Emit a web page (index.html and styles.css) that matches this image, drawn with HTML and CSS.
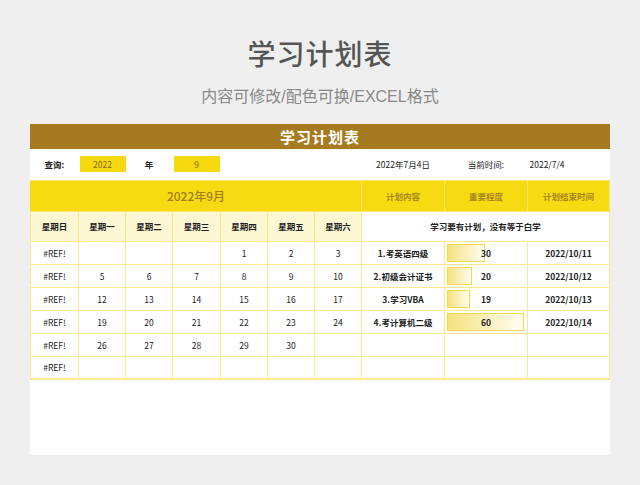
FILE: index.html
```html
<!DOCTYPE html>
<html lang="zh">
<head>
<meta charset="utf-8">
<title>学习计划表</title>
<link rel="stylesheet" href="styles.css">
</head>
<body>
<div class="page">
  <h1 class="title">学习计划表</h1>
  <p class="subtitle">内容可修改/配色可换/EXCEL格式</p>
  <div class="card">
    <div class="bar">学习计划表</div>
    <table class="grid">
      <colgroup>
        <col class="c48"><col class="c47"><col class="c47"><col class="c48"><col class="c47"><col class="c47"><col class="c47">
        <col class="c83"><col class="c83"><col class="c82">
      </colgroup>
      <tr class="query">
        <td class="bold">查询:</td>
        <td><div class="qbox">2022</div></td>
        <td class="bold">年</td>
        <td><div class="qbox">9</div></td>
        <td></td><td></td><td></td>
        <td>2022年7月4日</td>
        <td>当前时间:</td>
        <td class="left">2022/7/4</td>
      </tr>
      <tr class="head">
        <td colspan="7" class="month">2022年9月</td>
        <td class="hcell">计划内容</td>
        <td class="hcell">重要程度</td>
        <td class="hcell">计划结束时间</td>
      </tr>
      <tr class="week">
        <td>星期日</td><td>星期一</td><td>星期二</td><td>星期三</td><td>星期四</td><td>星期五</td><td>星期六</td>
        <td colspan="3" class="motto">学习要有计划，没有等于白学</td>
      </tr>
      <tr class="row">
        <td>#REF!</td><td></td><td></td><td></td><td>1</td><td>2</td><td>3</td>
        <td class="bold">1.考英语四级</td>
        <td class="lvl"><span class="lbar" style="width:38px"></span><span class="num">30</span></td>
        <td class="bold">2022/10/11</td>
      </tr>
      <tr class="row">
        <td>#REF!</td><td>5</td><td>6</td><td>7</td><td>8</td><td>9</td><td>10</td>
        <td class="bold">2.初级会计证书</td>
        <td class="lvl"><span class="lbar" style="width:25px"></span><span class="num">20</span></td>
        <td class="bold">2022/10/12</td>
      </tr>
      <tr class="row">
        <td>#REF!</td><td>12</td><td>13</td><td>14</td><td>15</td><td>16</td><td>17</td>
        <td class="bold">3.学习VBA</td>
        <td class="lvl"><span class="lbar" style="width:23px"></span><span class="num">19</span></td>
        <td class="bold">2022/10/13</td>
      </tr>
      <tr class="row">
        <td>#REF!</td><td>19</td><td>20</td><td>21</td><td>22</td><td>23</td><td>24</td>
        <td class="bold">4.考计算机二级</td>
        <td class="lvl"><span class="lbar" style="width:77px"></span><span class="num">60</span></td>
        <td class="bold">2022/10/14</td>
      </tr>
      <tr class="row">
        <td>#REF!</td><td>26</td><td>27</td><td>28</td><td>29</td><td>30</td><td></td>
        <td></td><td></td><td></td>
      </tr>
      <tr class="row last">
        <td>#REF!</td><td></td><td></td><td></td><td></td><td></td><td></td>
        <td></td><td></td><td></td>
      </tr>
    </table>
  </div>
</div>
</body>
</html>
```

FILE: styles.css
```css
* { box-sizing: border-box; }
html, body { margin: 0; padding: 0; }
body {
  background: #efefef;
  font-family: "Noto Sans CJK SC", "Noto Sans", sans-serif;
  color: #222;
}
.page { width: 640px; height: 485px; padding-top: 33px; }
.title {
  margin: 0;
  height: 40px;
  line-height: 40px;
  text-align: center;
  font-size: 28px;
  font-weight: 500;
  color: #555;
  letter-spacing: 1px;
}
.subtitle {
  margin: 14px 0 0;
  height: 20px;
  line-height: 20px;
  text-align: center;
  font-family: "Liberation Sans", "Noto Sans CJK SC", sans-serif;
  font-size: 16px;
  color: #888;
}
.card {
  margin: 17px 0 0 30px;
  width: 580px;
  height: 331px;
  background: #fff;
}
.bar {
  height: 25px;
  line-height: 25px;
  background: #a67a1e;
  color: #fff;
  text-align: center;
  font-size: 15px;
  font-weight: 700;
  letter-spacing: 1px;
}
.grid {
  width: 579px;
  border-collapse: collapse;
  table-layout: fixed;
  font-size: 8.5px;
}
.c48 { width: 48px; }
.c47 { width: 47px; }
.c83 { width: 83px; }
.c82 { width: 82px; }
.grid td { text-align: center; padding: 0; vertical-align: middle; }
.query td { height: 31px; font-size: 8.5px; }
.bold { font-weight: 700; }
.left { text-align: left !important; padding-left: 2px !important; }
.qbox {
  margin: 0 0 0 1px;
  width: 46px;
  height: 16px;
  line-height: 16px;
  background: #f6d90f;
  color: #8a6a14;
  font-size: 8.5px;
}
.head td {
  height: 31px;
  background: #f6da12;
  color: #a37d1c;
  border: 1px solid #f9e56a;
}
.head .month { font-size: 12px; font-weight: 500; border-left-color: #f6da12; }
.head .hcell { font-size: 8.5px; font-weight: 700; color: #a8871c; }
.week td {
  height: 30px;
  background: #fdf7d4;
  font-weight: 700;
  border: 1px solid #fbe98a;
}
.week .motto { background: #fff; }
.row td {
  height: 23px;
  border: 1px solid #fbe98a;
}
.row.last td { border-bottom: 2px solid #fbe98a; }
.lvl { position: relative; font-weight: 700; }
.lbar {
  position: absolute;
  left: 2px;
  top: 2px;
  bottom: 2px;
  border: 1px solid #f3d94c;
  background: linear-gradient(to right, #f6e27e, #fffdf2);
}
.num { position: relative; }
```
